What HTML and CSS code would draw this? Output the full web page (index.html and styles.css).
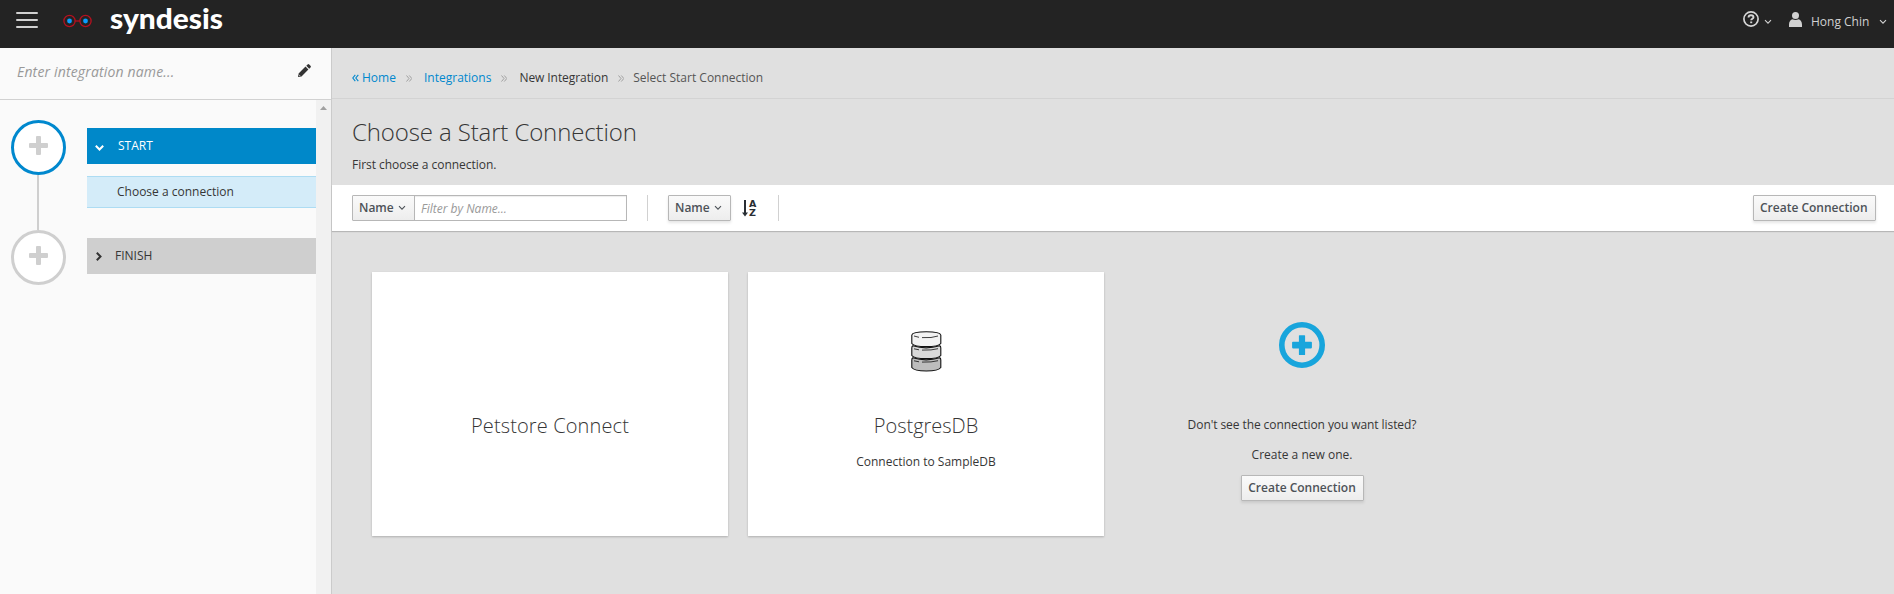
FILE: index.html
```html
<!DOCTYPE html>
<html lang="en">
<head>
<meta charset="utf-8">
<title>Syndesis</title>
<link rel="stylesheet" href="styles.css">
</head>
<body>
<svg class="defs" width="0" height="0">
  <symbol id="angle-down" viewBox="0 0 8 6"><path d="M1 1.2 4 4.2 7 1.2" fill="none" stroke="currentColor" stroke-width="1.1"/></symbol>
  <symbol id="plus" viewBox="0 0 19 19"><path d="M8 0h3q1 0 1 1v6h6q1 0 1 1v3q0 1-1 1h-6v6q0 1-1 1H8q-1 0-1-1v-6H1q-1 0-1-1V8q0-1 1-1h6V1q0-1 1-1z" fill="#cfcfcf"/></symbol>
  <symbol id="raquo" viewBox="0 0 6 7"><path d="M.5 .5 3 3.5 .5 6.5M3.3 .5 5.8 3.5 3.3 6.5" fill="none" stroke="currentColor" stroke-width=".9"/></symbol>
</svg>
<header class="navbar">
  <div class="menu"><i></i><i></i><i></i></div>
  <svg class="logo-mark" width="29" height="14" viewBox="0 0 29 14">
    <g fill="none" stroke="#b5101f" stroke-width="1.3"><circle cx="6.5" cy="7" r="5.6"/><circle cx="22.5" cy="7" r="5.6"/><path d="M12 7h5"/></g>
    <circle cx="6.5" cy="7" r="2.4" fill="#0a9dff"/><circle cx="22.5" cy="7" r="2.4" fill="#0a9dff"/>
  </svg>
  <svg class="logo-text" width="116" height="40" viewBox="0 0 116 40"><text x="0" y="29" textLength="113" lengthAdjust="spacingAndGlyphs">syndesis</text></svg>
  <div class="nav-right">
    <svg class="help" width="16" height="16" viewBox="0 0 16 16"><circle cx="8" cy="8" r="7.1" fill="none" stroke="#d6d6d6" stroke-width="1.7"/><path d="M5.5 6.5C5.6 4.9 6.6 4.3 8 4.3s2.5.7 2.5 2c0 1.5-2.300 1.500-2.300 3" fill="none" stroke="#d6d6d6" stroke-width="1.900"/><path d="M7.200 10.500h2v1.700h-2z" fill="#d6d6d6"/></svg>
    <svg class="caret-help" width="8" height="6"><use href="#angle-down"/></svg>
    <svg class="user" width="13" height="15" viewBox="0 0 13 15"><circle cx="6.5" cy="3.5" r="3.5" fill="#d1d1d1"/><path d="M0 15v-2.6C0 9.6 1.5 7.8 3.6 7.3c1.700.9 4.1.9 5.800 0 2.100.5 3.600 2.300 3.600 5.100V15z" fill="#d1d1d1"/></svg>
    <span class="username">Hong Chin</span>
    <svg class="caret-user" width="8" height="6"><use href="#angle-down"/></svg>
  </div>
</header>
<div class="layout">
  <aside class="sidebar">
    <div class="name-row">
      <span class="name-input">Enter integration name...</span>
      <svg class="pencil" width="13" height="13" viewBox="0 0 13 13"><path d="M0 13l.6-3.500L7.500 2.600l2.900 2.900L3.500 12.400zM8.300 1.800 9.600.5q.8-.8 1.600 0L12.500 1.800q.8.8 0 1.600L11.200 4.700z" fill="#333"/><path d="M.9 10.700l1.400 1.400" stroke="#fafafa" stroke-width=".7"/></svg>
    </div>
    <div class="steps">
      <div class="rail">
        <div class="node active"><svg width="19" height="19"><use href="#plus"/></svg></div>
        <div class="link"></div>
        <div class="node"><svg width="19" height="19"><use href="#plus"/></svg></div>
      </div>
      <div class="bars">
        <div class="bar start"><svg width="9" height="6" viewBox="0 0 9 6"><path d="M.8.8 4.500 4.500 8.200.8" fill="none" stroke="#fff" stroke-width="2"/></svg><span>START</span></div>
        <div class="bar sub">Choose a connection</div>
        <div class="bar finish"><svg width="6" height="9" viewBox="0 0 6 9"><path d="M.8.8 4.500 4.500.8 8.200" fill="none" stroke="#333" stroke-width="2"/></svg><span>FINISH</span></div>
      </div>
      <div class="scroll"><svg width="7" height="4" viewBox="0 0 7 4"><path d="M0 4 3.500 0 7 4z" fill="#a0a0a0"/></svg></div>
    </div>
  </aside>
  <main class="main">
    <nav class="crumbs">
      <a class="home"><svg width="7" height="8" viewBox="0 0 7 8"><path d="M3.300.8.8 4l2.500 3.200M6.300.8 3.800 4l2.500 3.200" fill="none" stroke="#0088ce" stroke-width="1.100"/></svg>Home</a>
      <svg class="sep s1" width="6" height="7"><use href="#raquo"/></svg>
      <a>Integrations</a>
      <svg class="sep s2" width="6" height="7"><use href="#raquo"/></svg>
      <span class="crumb-new">New Integration</span>
      <svg class="sep s3" width="6" height="7"><use href="#raquo"/></svg>
      <span class="crumb-last">Select Start Connection</span>
    </nav>
    <section class="intro">
      <h1>Choose a Start Connection</h1>
      <p>First choose a connection.</p>
    </section>
    <section class="toolbar">
      <div class="btn name flat">Name<svg width="8" height="6"><use href="#angle-down"/></svg></div>
      <div class="filter">Filter by Name...</div>
      <div class="divider"></div>
      <div class="btn name">Name<svg width="8" height="6"><use href="#angle-down"/></svg></div>
      <div class="sort"><svg width="6" height="17" viewBox="0 0 6 17"><path d="M3 0v14" stroke="#292e34" stroke-width="2"/><path d="M0 12.500h6L3 16.500z" fill="#292e34"/></svg><div class="az"><span>A</span><span>Z</span></div></div>
      <div class="divider second"></div>
      <div class="btn create">Create Connection</div>
    </section>
    <section class="cards">
      <article class="card"><div class="icon"></div><h2 class="petstore">Petstore Connect</h2></article>
      <article class="card">
        <div class="icon"><svg width="31" height="41" viewBox="0 0 31 41">
          <g stroke="#111" stroke-width="1.100">
          <path d="M.8 29q0-1.500 1-2.200Q15 31 28.800 26.800q1 .7 1 2.200v7.500c-3 4.600-26 4.600-29 0z" fill="#bdbdbd"/>
          <path d="M.8 17q0-1.500 1-2.200Q15 19 28.800 14.800q1 .7 1 2.200v7.500c-3 4.200-26 4.200-29 0z" fill="#d9d9d9"/>
          <path d="M.8 4c1-4.300 28-4.300 29 0v8.500c-3 4.200-26 4.200-29 0z" fill="#f2f2f2"/>
          <path d="M3 5l5 1.300M11 6.600q10 .6 16-1.600M3 17.800l5 1M11 19.100q10 .3 16-1.400M3 29.800l5 1M11 31.100q10 .3 16-1.400" fill="none" stroke-width=".8"/></g>
        </svg></div>
        <h2>PostgresDB</h2><p>Connection to SampleDB</p>
      </article>
      <article class="blank">
        <svg width="46" height="46" viewBox="0 0 46 46"><circle cx="23" cy="23" r="20.200" fill="none" stroke="#18a5dc" stroke-width="5.600"/><path d="M20.500 13.200h5q.6 0 .6.6v6h6q.8 0 .8.8v5q0 .8-.8.8h-6v6q0 .6-.6.6h-5q-.6 0-.6-.6v-6h-6q-.8 0-.8-.8v-5q0-.8.8-.8h6v-6q0-.6.600-.6z" fill="#18a5dc"/></svg>
        <p class="question">Don't see the connection you want listed?</p>
        <p>Create a new one.</p>
        <div class="btn create-new">Create Connection</div>
      </article>
    </section>
  </main>
</div>
</body>
</html>
```
FILE: styles.css
```css
* { box-sizing: border-box; }
body { margin: 0; height: 594px; overflow: hidden; font: 12px/20px "Open Sans", sans-serif; color: #363636; background: #e0e0e0; }
h1, h2, p { margin: 0; }
svg { display: block; flex: none; }
.defs { display: none; }
.navbar { height: 48px; background: #232323; display: flex; align-items: flex-start; color: #d1d1d1; }
.menu { margin: 12px 0 0 16px; width: 22px; display: grid; gap: 4px; }
.menu i { height: 2px; border-radius: 1px; background: #d1d1d1; }
.menu i + i { margin-top: 1px; }
.logo-mark { margin: 14px 0 0 25px; }
.logo-text { margin-left: 18px; }
.logo-text text { font: 900 28px Lato, sans-serif; fill: #fff; }
.nav-right { margin-left: auto; display: flex; align-items: flex-start; }
.help { margin-top: 11px; }
.caret-help { margin: 19px 0 0 5px; }
.user { margin: 12px 0 0 17px; }
.username { width: 59px; margin: 12px 0 0 9px; white-space: nowrap; }
.caret-user { margin: 19px 7px 0 9px; }

.layout { display: flex; height: 546px; }
.sidebar { width: 332px; flex: none; background: #fafafa; border-right: 1px solid #cbcbcb; display: flex; flex-direction: column; }
.name-row { height: 52px; border-bottom: 1px solid #d1d1d1; display: flex; justify-content: space-between; padding: 14px 20px 0 17px; }
.name-input { font-size: 14px; letter-spacing: .16px; font-style: italic; color: #999; }
.pencil { margin-top: 2px; }
.steps { flex: 1; display: flex; }
.rail { width: 87px; padding: 20px 0 0 11px; }
.node { width: 55px; height: 55px; border: 3px solid #cfcfcf; border-radius: 50%; background: #fff; padding: 13px 0 0 15px; }
.node.active { border-color: #0088ce; }
.link { width: 2px; height: 55px; margin-left: 26px; background: #cfcfcf; }
.bars { width: 229px; padding-top: 28px; }
.bar { display: flex; align-items: center; }
.start { height: 36px; padding-left: 8px; background: #0088c9; color: #fff; gap: 14px; }
.start svg { margin-top: 3px; }
.sub { height: 32px; margin: 12px 0 30px; padding-left: 30px; background: #d4ecf9; border: solid #addcf3; border-width: 1px 0; }
.finish { height: 36px; padding-left: 9px; background: #cfcfcf; gap: 13px; }
.scroll { width: 15px; background: #f1f1f1; padding: 6px 0 0 4px; }

.main { flex: 1; min-width: 0; }
.crumbs { height: 51px; border-bottom: 1px solid #d3d3d3; display: flex; padding: 20px 0 0 20px; white-space: nowrap; }
.crumbs a { color: #0088ce; }
.crumbs .home { display: flex; width: 43px; gap: 3px; }
.home svg { margin-top: 6px; }
.sep { margin-top: 7px; color: #999; }
.s1 { margin-left: 11px; margin-right: 12px; }
.s2 { margin: 7px 12px 0 10px; }
.s3 { margin: 7px 9px 0 10px; }
.crumb-new { letter-spacing: -.07px; }
.crumb-last { color: #555; }
.intro { height: 86px; padding: 19px 0 0 20px; }
.intro h1 { font-size: 24px; font-weight: 300; line-height: 28px; letter-spacing: -.12px; }
.intro p { margin-top: 9px; letter-spacing: -.04px; }
.toolbar { height: 46px; background: #fff; display: flex; padding: 10px 18px 0 20px; box-shadow: 0 1px 1px rgba(0,0,0,.18); }
.btn { height: 26px; border: 1px solid #b7b7b7; border-radius: 1px; background: linear-gradient(#fafafa, #ededed); box-shadow: 0 2px 3px rgba(3,3,3,.1); color: #4d5258; font-weight: 600; line-height: 24px; padding: 0 6px; white-space: nowrap; }
.name { width: 63px; display: flex; align-items: center; justify-content: space-between; padding-right: 8px; }
.flat { box-shadow: none; }
.filter { width: 213px; height: 26px; margin-left: -1px; border: 1px solid #b7b7b7; box-shadow: inset 0 1px 1px rgba(3,3,3,.075); padding-left: 6px; line-height: 26px; font-style: italic; color: #999; }
.divider { width: 1px; height: 26px; margin: 0 20px; background: #d1d1d1; }
.sort { width: 16px; display: flex; gap: 1px; padding-top: 5px; margin-left: 11px; }
.az { display: flex; flex-direction: column; font: bold 9.5px/9px "DejaVu Sans", sans-serif; color: #292e34; margin-top: -1px; }
.second { margin-left: 20px; }
.create { margin-left: auto; width: 123px; }
.cards { display: flex; gap: 20px; padding: 41px 0 0 40px; text-align: center; }
.card { width: 356px; height: 264px; background: #fff; box-shadow: 0 1px 2px rgba(3,3,3,.22); }
.icon { height: 140px; padding: 59px 0 0 163px; }
.card h2 { font-size: 20px; font-weight: 300; line-height: 28px; }
.card .petstore { letter-spacing: .13px; }
.card p { margin-top: 12px; }
.blank { width: 356px; display: flex; flex-direction: column; align-items: center; padding-top: 50px; }
.blank svg { margin-bottom: 47px; }
.blank p + p { margin: 10px 0; }
.question { letter-spacing: -.08px; }
.create-new { width: 123px; }
```
